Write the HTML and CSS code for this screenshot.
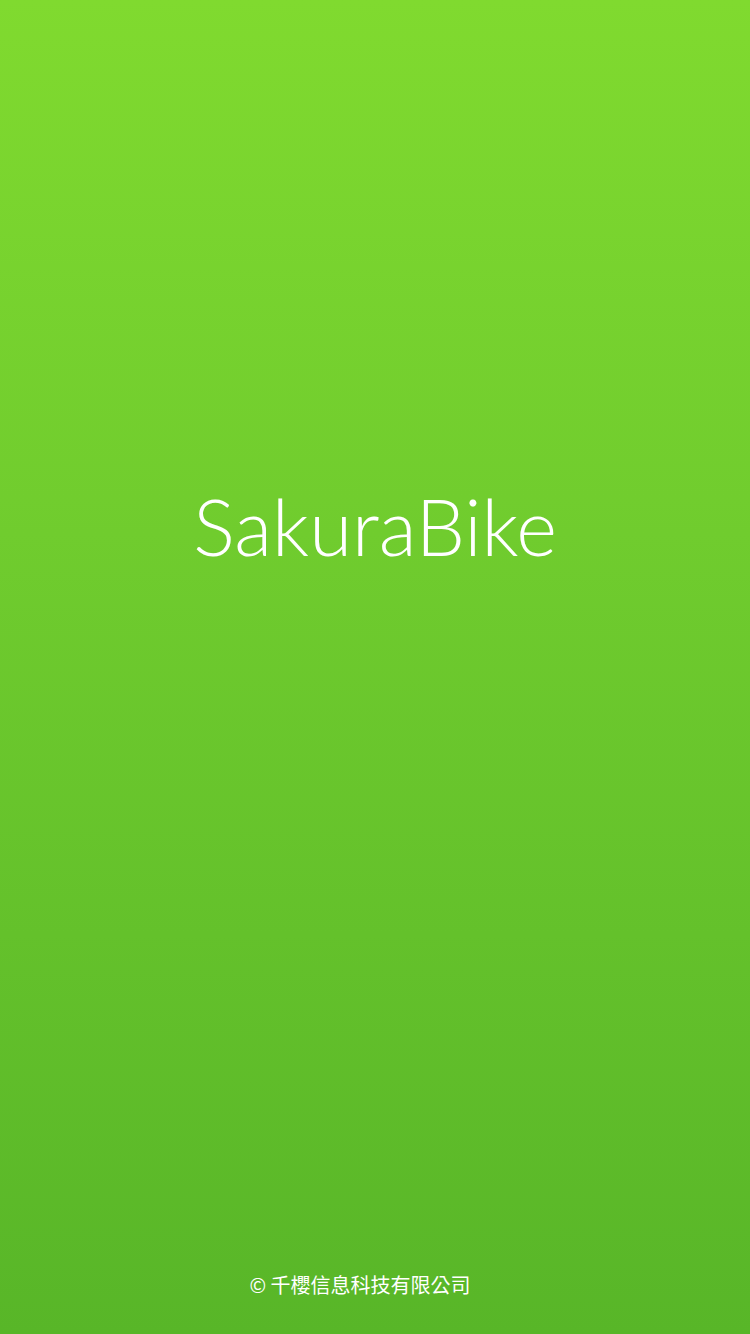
FILE: index.html
```html
<!DOCTYPE html>
<html lang="zh-Hant">
<head>
<meta charset="utf-8">
<link rel="stylesheet" href="styles.css">
</head>
<body>
<main class="splash">
  <div class="spacer"></div>
  <h1 class="logo">SakuraBike</h1>
  <div class="spacer"></div>
  <footer class="copy">© 千櫻信息科技有限公司</footer>
</main>
</body>
</html>
```
FILE: styles.css
```css
html, body {
  margin: 0;
  padding: 0;
  width: 750px;
  height: 1334px;
  overflow: hidden;
}
.splash {
  width: 750px;
  height: 1334px;
  display: flex;
  flex-direction: column;
  align-items: center;
  background: linear-gradient(to bottom, #80da2f 0%, #70cc2e 40%, #58b628 100%);
  color: #ffffff;
}
.spacer {
  flex: 1;
}
.spacer:first-child {
  flex: 0 0 476px;
}
.logo {
  margin: 0;
  font-family: "Lato", "Noto Sans", sans-serif;
  font-weight: 300;
  font-size: 78px;
  line-height: 100px;
  letter-spacing: 0;
}
.copy {
  font-family: "Noto Sans CJK TC", "Noto Sans", sans-serif;
  font-size: 20px;
  line-height: 30px;
  margin-bottom: 34px;
  padding-right: 30px;
}
```
